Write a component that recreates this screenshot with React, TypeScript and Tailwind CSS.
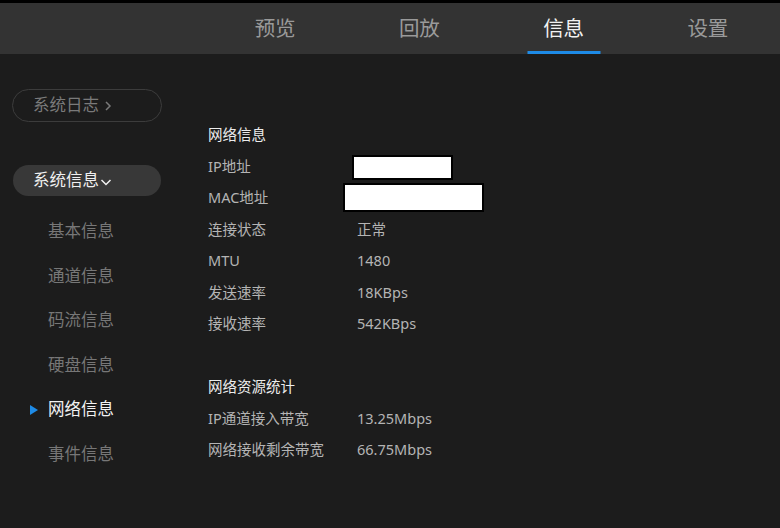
import React from 'react';

const tabs = ['预览', '回放', '信息', '设置'];
const subItems = ['基本信息', '通道信息', '码流信息', '硬盘信息', '网络信息', '事件信息'];

const netRows: { label: string; value?: string; box?: 'ip' | 'mac' }[] = [
  { label: 'IP地址', box: 'ip' },
  { label: 'MAC地址', box: 'mac' },
  { label: '连接状态', value: '正常' },
  { label: 'MTU', value: '1480' },
  { label: '发送速率', value: '18KBps' },
  { label: '接收速率', value: '542KBps' },
];

const statRows = [
  { label: 'IP通道接入带宽', value: '13.25Mbps' },
  { label: '网络接收剩余带宽', value: '66.75Mbps' },
];

function Row({ label, children }: { label: string; children?: React.ReactNode }) {
  return (
    <div className="flex items-center h-[31.6px] text-[14.5px] text-[#b4b4b4]">
      <div className="w-[149px]">{label}</div>
      <div className="flex items-center">{children}</div>
    </div>
  );
}

export default function App() {
  const active = '网络信息';
  return (
    <div
      className="w-[780px] h-[528px] bg-[#1c1c1c] overflow-hidden"
      style={{ fontFamily: '"Noto Sans", "Noto Sans CJK SC", sans-serif' }}
    >
      {/* Top nav */}
      <div className="h-[54px] bg-[#333333] border-t-[3px] border-black flex pl-[203px]">
        {tabs.map((t) => (
          <div key={t} className="w-[145px] relative flex items-center justify-center">
            <span className={`text-[20.5px] ${t === '信息' ? 'text-[#f2f2f2]' : 'text-[#9a9a9a]'}`}>{t}</span>
            {t === '信息' && (
              <div className="absolute bottom-0 left-1/2 -translate-x-1/2 w-[73px] h-[3px] bg-[#1e8be6]" />
            )}
          </div>
        ))}
      </div>

      <div className="flex">
        {/* Sidebar */}
        <div className="w-[208px] shrink-0 pl-[12px] pt-[35px]">
          <div className="w-[150px] h-[33px] rounded-full border border-[#3c3c3c] flex items-center pl-[20px] text-[16.5px] text-[#7a7a7a]">
            系统日志
            <svg width="10" height="12" viewBox="0 0 10 12" className="ml-[4px]">
              <path d="M3 2 L7 6 L3 10" stroke="#7a7a7a" strokeWidth="1.5" fill="none" />
            </svg>
          </div>
          <div className="mt-[43px] ml-[1px] w-[148px] h-[31px] rounded-full bg-[#383838] flex items-center pl-[20px] text-[16.5px] text-[#f0f0f0]">
            系统信息
            <svg width="12" height="10" viewBox="0 0 12 10" className="ml-[1px] mt-[2px]">
              <path d="M1.5 3 L6 7.5 L10.5 3" stroke="#f0f0f0" strokeWidth="1.5" fill="none" />
            </svg>
          </div>
          <div className="mt-[13px]">
            {subItems.map((s) => (
              <div key={s} className="h-[44.6px] flex items-center relative pl-[36px]">
                {s === active && (
                  <svg width="8" height="10" viewBox="0 0 8 10" className="absolute left-[18px]">
                    <path d="M0 0 L8 5 L0 10 Z" fill="#1e8be6" />
                  </svg>
                )}
                <span className={`text-[16.5px] ${s === active ? 'text-[#f2f2f2]' : 'text-[#777777]'}`}>{s}</span>
              </div>
            ))}
          </div>
        </div>

        {/* Content */}
        <div className="pt-[65px]">
          <div className="h-[31.6px] flex items-center text-[14.5px] text-[#ececec]">网络信息</div>
          {netRows.map((r) => (
            <Row key={r.label} label={r.label}>
              {r.box === 'ip' && (
                <div className="ml-[-5px] mt-[3px] w-[101px] h-[25px] bg-white border-2 border-black" />
              )}
              {r.box === 'mac' && (
                <div className="ml-[-14px] w-[141px] h-[29px] bg-white border-2 border-black" />
              )}
              {r.value}
            </Row>
          ))}
          <div className="h-[31px]" />
          <div className="h-[31.6px] flex items-center text-[14.5px] text-[#ececec]">网络资源统计</div>
          {statRows.map((r) => (
            <Row key={r.label} label={r.label}>
              {r.value}
            </Row>
          ))}
        </div>
      </div>
    </div>
  );
}
